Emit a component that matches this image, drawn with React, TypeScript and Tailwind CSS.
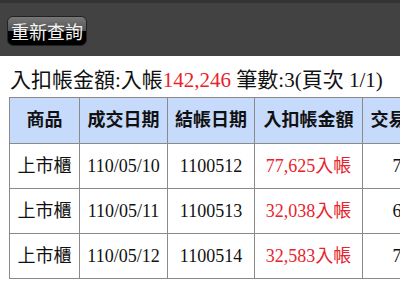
import React from "react"

const rows = [
  { item: "上市櫃", tradeDate: "110/05/10", settleDate: "1100512", amount: "77,625入帳", trade: "77,625" },
  { item: "上市櫃", tradeDate: "110/05/11", settleDate: "1100513", amount: "32,038入帳", trade: "64,076" },
  { item: "上市櫃", tradeDate: "110/05/12", settleDate: "1100514", amount: "32,583入帳", trade: "75,166" },
]

const font = { fontFamily: '"Liberation Serif", "Noto Sans CJK TC", serif' }

export default function App() {
  return (
    <div className="w-[400px] h-[288px] overflow-hidden bg-white text-[#111]" style={font}>
      {/* 頂部工具列 */}
      <div className="h-[56px] bg-[#424242] border-t-[3px] border-[#333333] pt-[13px] pl-[7px]">
        <button className="w-[80px] h-[30px] rounded-[6px] overflow-hidden relative border border-[#222] text-[#f4f4f4] text-[18px] leading-none"
          style={{ fontFamily: '"Noto Sans CJK TC", sans-serif' }}>
          <span className="absolute inset-x-0 top-0 h-1/2 bg-gradient-to-b from-[#777777] to-[#545454]" />
          <span className="absolute inset-x-0 bottom-0 h-1/2 bg-black" />
          <span className="relative">重新查詢</span>
        </button>
      </div>

      {/* 摘要 */}
      <div className="pl-[10px] pt-[11px] h-[41px] text-[21px] leading-[26px] whitespace-nowrap">
        入扣帳金額:入帳<span className="text-[#e8232b]">142,246</span> 筆數:3(頁次 1/1)
      </div>

      <div className="pl-[9px] w-max">
        <table className="table-fixed w-[441px] border-collapse text-[18px] whitespace-nowrap">
          <thead>
            <tr className="h-[46px] bg-[#c6dafc]">
              <th className="w-[70px] border border-[#8a8a8a] font-bold">商品</th>
              <th className="w-[88px] border border-[#8a8a8a] font-bold">成交日期</th>
              <th className="w-[87px] border border-[#8a8a8a] font-bold">結帳日期</th>
              <th className="w-[108px] border border-[#8a8a8a] font-bold">入扣帳金額</th>
              <th className="w-[88px] border border-[#8a8a8a] font-bold">交易金額</th>
            </tr>
          </thead>
          <tbody>
            {rows.map((r) => (
              <tr key={r.tradeDate} className="h-[45px]">
                <td className="border border-[#8a8a8a] text-center">{r.item}</td>
                <td className="border border-[#8a8a8a] text-center">{r.tradeDate}</td>
                <td className="border border-[#8a8a8a] text-center">{r.settleDate}</td>
                <td className="border border-[#8a8a8a] text-center text-[#e8232b]">{r.amount}</td>
                <td className="border border-[#8a8a8a] text-right pr-[8px]">{r.trade}</td>
              </tr>
            ))}
          </tbody>
        </table>
      </div>
    </div>
  )
}
